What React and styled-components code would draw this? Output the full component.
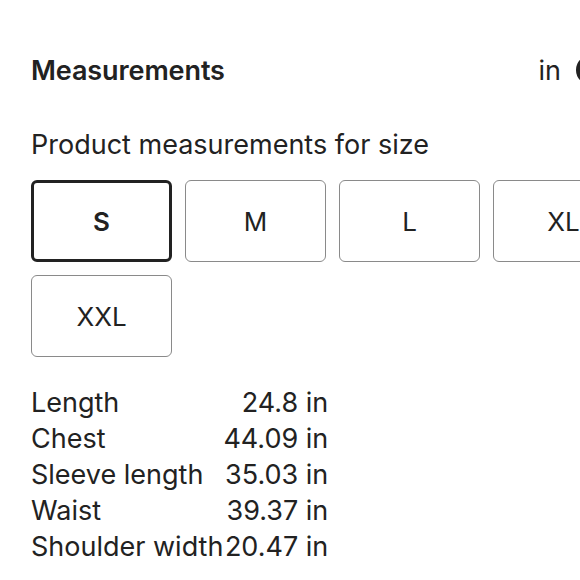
import React, { useState } from "react";
import styled, { createGlobalStyle } from "styled-components";

const GlobalStyle = createGlobalStyle`
  html, body {
    margin: 0;
    padding: 0;
    background: #fff;
    overflow: hidden;
  }
  body {
    font-family: Inter, "Noto Sans", "Liberation Sans", sans-serif;
    color: #222;
  }
`;

const Page = styled("div")`
  width: 580px;
  height: 580px;
  overflow: hidden;
  padding: 36px 0 0 31px;
  box-sizing: border-box;
`;

const Header = styled("div")`
  display: flex;
  align-items: center;
  justify-content: space-between;
  height: 68px;
  width: 585px;
`;

const Title = styled("h2")`
  margin: 0;
  font-size: 27px;
  font-weight: 600;
  letter-spacing: -0.1px;
`;

const UnitSwitch = styled("div")`
  display: flex;
  align-items: center;
  gap: 15px;
  font-size: 27px;
`;

const Knob = styled("span")`
  display: block;
  width: 40px;
  height: 30px;
  border-radius: 15px;
  background: #222;
`;

const Subtitle = styled("p")`
  margin: 24px 0 0;
  font-size: 27px;
  line-height: 33px;
  font-weight: 400;
`;

const SizeGrid = styled("div")`
  display: grid;
  grid-template-columns: repeat(4, 141px);
  gap: 13px 13px;
  margin-top: 19px;
  width: 620px;
`;

const SizeButton = styled("button")`
  height: 82px;
  box-sizing: border-box;
  background: #fff;
  border: ${(p) => (p.$active ? "3px solid #222" : "1.5px solid #8a8a8a")};
  border-radius: 6px;
  font-family: inherit;
  font-size: 26px;
  font-weight: ${(p) => (p.$active ? 600 : 400)};
  color: #222;
  cursor: pointer;
`;

const Table = styled("table")`
  margin-top: 27px;
  border-collapse: collapse;
  font-size: 27px;
`;

const Cell = styled("td")`
  padding: 0;
  height: 36px;
  text-align: ${(p) => (p.$right ? "right" : "left")};
  white-space: nowrap;
`;

const sizes = ["S", "M", "L", "XL", "XXL"];

const rows = [
  ["Length", "24.8 in"],
  ["Chest", "44.09 in"],
  ["Sleeve length", "35.03 in"],
  ["Waist", "39.37 in"],
  ["Shoulder width", "20.47 in"],
];

export default function App() {
  const [size, setSize] = useState("S");
  return (
    <Page>
      <GlobalStyle />
      <Header>
        <Title>Measurements</Title>
        <UnitSwitch>
          in
          <Knob />
        </UnitSwitch>
      </Header>
      <Subtitle>Product measurements for size</Subtitle>
      <SizeGrid>
        {sizes.map((s) => (
          <SizeButton key={s} $active={s === size} onClick={() => setSize(s)}>
            {s}
          </SizeButton>
        ))}
      </SizeGrid>
      <Table>
        <tbody>
          {rows.map(([label, value]) => (
            <tr key={label}>
              <Cell>{label}</Cell>
              <Cell $right>{value}</Cell>
            </tr>
          ))}
        </tbody>
      </Table>
    </Page>
  );
}
